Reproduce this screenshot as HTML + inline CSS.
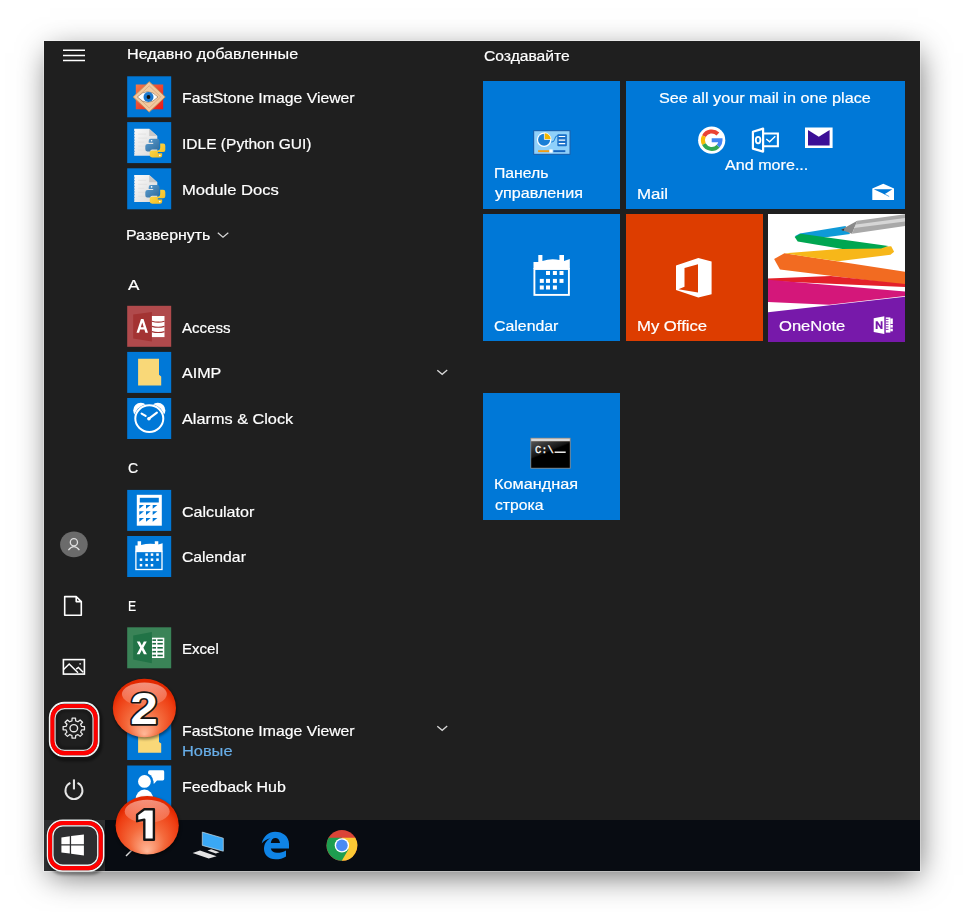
<!DOCTYPE html>
<html><head><meta charset="utf-8">
<style>
html,body{margin:0;padding:0;background:#fff;width:964px;height:912px;overflow:hidden;}
body{position:relative;font-family:"Liberation Sans",sans-serif;}
.a{position:absolute;}
#menu{position:absolute;left:44px;top:41px;width:876px;height:830px;background:#1f1f1f;
 box-shadow:0 0 0 1px rgba(255,255,255,0.3), 2px 8px 30px -4px rgba(0,0,0,0.62);}
#taskbar{position:absolute;left:44px;top:820px;width:876px;height:51px;background:#080c12;}
.t{position:absolute;color:#fff;font-size:15px;line-height:20px;white-space:nowrap;transform-origin:0 0;}
.ico{position:absolute;left:127px;width:44px;height:41px;background:#0078d7;}
.tile{position:absolute;background:#0078d7;}
.tl{position:absolute;color:#fff;font-size:15px;line-height:20.5px;}
.hdr{position:absolute;color:#fff;font-size:15px;line-height:18px;}
</style></head><body>
<div id="menu"></div>
<div id="taskbar"></div>

<!-- hamburger -->
<svg class="a" style="left:0;top:0" width="120" height="80"><path d="M63 50.3 H85 M63 55.4 H85 M63 60.5 H85" stroke="#fff" stroke-width="1.5"/></svg>


<!-- rail icons -->
<svg class="a" style="left:0;top:0" width="964" height="912" viewBox="0 0 964 912">
 <!-- user -->
 <ellipse cx="73.9" cy="544.4" rx="13.8" ry="12.9" fill="#6b6b6b"/>
 <circle cx="73.9" cy="542.2" r="3.6" fill="none" stroke="#e0e0e0" stroke-width="1.3"/>
 <path d="M68.4 550.2 Q73.9 543.2 79.4 550.2" fill="none" stroke="#e0e0e0" stroke-width="1.3"/>
 <!-- document -->
 <path d="M64.7 596.6 H76.2 L81.3 601.6 V615.3 H64.7 Z M76.2 596.6 V601.6 H81.3" fill="none" stroke="#fff" stroke-width="1.6" stroke-linejoin="round"/>
 <!-- pictures -->
 <rect x="63.4" y="659.6" width="21" height="14.5" fill="none" stroke="#fff" stroke-width="1.6"/>
 <path d="M63.6 669.5 L69.2 664 L78 672.8 M76.2 669.2 L78.4 667.4 L83.2 672.2" fill="none" stroke="#fff" stroke-width="1.5"/>
 <rect x="79.4" y="663.1" width="1.5" height="1.5" fill="#ddd"/>
 <!-- gear -->
 <g transform="translate(73.8 728.2) scale(1 0.94)">
  <path id="gear" fill="none" stroke="#e8e8e8" stroke-width="1.3" stroke-linejoin="round" d="M10.67 -1.69 L10.67 1.69 L7.78 1.87 L6.82 4.18 L8.74 6.35 L6.35 8.74 L4.18 6.82 L1.87 7.78 L1.69 10.67 L-1.69 10.67 L-1.87 7.78 L-4.18 6.82 L-6.35 8.74 L-8.74 6.35 L-6.82 4.18 L-7.78 1.87 L-10.67 1.69 L-10.67 -1.69 L-7.78 -1.87 L-6.82 -4.18 L-8.74 -6.35 L-6.35 -8.74 L-4.18 -6.82 L-1.87 -7.78 L-1.69 -10.67 L1.69 -10.67 L1.87 -7.78 L4.18 -6.82 L6.35 -8.74 L8.74 -6.35 L6.82 -4.18 L7.78 -1.87 Z"/>
  <circle r="3.8" fill="none" stroke="#e8e8e8" stroke-width="1.4"/>
 </g>
 <!-- power -->
 <path d="M70.4 782.9 A8.5 8.5 0 1 0 77.5 782.9" fill="none" stroke="#e6e6e6" stroke-width="1.9"/>
 <line x1="73.95" y1="779.4" x2="73.95" y2="789.4" stroke="#e0e0e0" stroke-width="2.1"/>
</svg>

<!-- list -->







<!-- tiles -->
<div class="tile" style="left:483px;top:81px;width:137px;height:128px"></div>
<div class="tile" style="left:626px;top:81px;width:279px;height:128px"></div>
<div class="tile" style="left:483px;top:214px;width:137px;height:127px"></div>
<div class="tile" style="left:626px;top:214px;width:137px;height:127px;background:#dd3d00"></div>
<div class="tile" style="left:768px;top:214px;width:137px;height:127px;background:#fff"></div>
<div class="tile" style="left:483px;top:393px;width:137px;height:127px"></div>











<!--ICONS-->
<svg class="a" style="left:0;top:0" width="964" height="912" viewBox="0 0 964 912">
<defs>
<linearGradient id="fsred" x1="0" y1="0" x2="1" y2="1"><stop offset="0" stop-color="#f47a4a"/><stop offset="1" stop-color="#e81818"/></linearGradient>
<linearGradient id="page" x1="0" y1="0" x2="1" y2="1"><stop offset="0" stop-color="#fafafa"/><stop offset="1" stop-color="#d8d8d8"/></linearGradient>
<linearGradient id="pyb" x1="0" y1="0" x2="1" y2="1"><stop offset="0" stop-color="#5a9fd4"/><stop offset="1" stop-color="#306998"/></linearGradient>
<linearGradient id="pyy" x1="0" y1="0" x2="1" y2="1"><stop offset="0" stop-color="#ffe052"/><stop offset="1" stop-color="#f2b61c"/></linearGradient>
<linearGradient id="fold" x1="0" y1="0" x2="1" y2="1"><stop offset="0" stop-color="#fde49b"/><stop offset="1" stop-color="#f6cf66"/></linearGradient>
<linearGradient id="cmdg" x1="0" y1="0" x2="0.6" y2="1"><stop offset="0" stop-color="#555"/><stop offset="0.45" stop-color="#151515"/><stop offset="0.5" stop-color="#000"/></linearGradient>
</defs>
<g transform="translate(127.2 76.3)">
<rect width="44" height="41" fill="#0078d7"/>
<rect x="8.6" y="8.2" width="27.4" height="24.8" fill="url(#fsred)"/>
<path d="M22 5.4 L38 20.6 L22 35.8 L6 20.6 Z" fill="#f2c9a0" stroke="#c8905c" stroke-width="1"/>
<path d="M22 9.5 L33.5 20.6 L22 31.7 L10.5 20.6 Z" fill="none" stroke="#dba578" stroke-width="0.8"/>
<path d="M10.2 20.7 Q20.5 9.8 30.8 20.7 Q20.5 31.6 10.2 20.7 Z" fill="#fff" stroke="#8a6040" stroke-width="0.6"/>
<circle cx="21.3" cy="20.7" r="5" fill="#1a78d0"/>
<circle cx="21.3" cy="20.7" r="1.9" fill="#111"/>
</g>
<g transform="translate(127.2 122.1)">
<rect width="44" height="41" fill="#0078d7"/>
<path d="M7 6.6 H22 L30.1 14 V33.7 H7 Z" fill="url(#page)"/>
<path d="M22 6.6 V14 H30.1 Z" fill="#c8c8c8"/>
<path d="M7.2 9 V32" stroke="#6aa8e0" stroke-width="1.2" stroke-dasharray="1.2 1.6"/>
<path d="M11 12 H19 M11 16 H20 M11 20 H17 M11 24 H18 M11 28 H19" stroke="#e0e0e0" stroke-width="0.8"/>
<path d="M23.5 16.7 H30 Q32.3 16.7 32.3 19 V25.5 Q32.3 27.5 30 27.5 H25 Q23 27.5 23 29.5 V29.3 H20 Q18.1 29.3 18.1 27 V24 Q18.1 21.8 20.5 21.8 H26 V20.6 H21.5 V19 Q21.5 16.7 23.5 16.7 Z" fill="url(#pyb)"/>
<path d="M27.5 21.4 V23.5 Q27.5 25.5 25.5 25.5 H24.5" fill="none"/>
<path d="M33 21.4 H36 Q38.1 21.4 38.1 23.6 V28 Q38.1 30 36 30 H30.5 V31.2 H35 V33.2 Q35 35.4 32.8 35.4 H25 Q22.5 35.4 22.5 33 V30.5 Q22.5 28.4 24.8 28.4 H30.5 Q33 28.4 33 26 Z" fill="url(#pyy)"/>
<circle cx="24.4" cy="18.6" r="0.8" fill="#fff"/>
<circle cx="32.6" cy="33.3" r="0.8" fill="#fff"/>
</g>
<g transform="translate(127.2 168.3)">
<rect width="44" height="41" fill="#0078d7"/>
<path d="M7 6.6 H22 L30.1 14 V33.7 H7 Z" fill="url(#page)"/>
<path d="M22 6.6 V14 H30.1 Z" fill="#c8c8c8"/>
<path d="M7.2 9 V32" stroke="#6aa8e0" stroke-width="1.2" stroke-dasharray="1.2 1.6"/>
<path d="M11 12 H19 M11 16 H20 M11 20 H17 M11 24 H18 M11 28 H19" stroke="#e0e0e0" stroke-width="0.8"/>
<path d="M23.5 16.7 H30 Q32.3 16.7 32.3 19 V25.5 Q32.3 27.5 30 27.5 H25 Q23 27.5 23 29.5 V29.3 H20 Q18.1 29.3 18.1 27 V24 Q18.1 21.8 20.5 21.8 H26 V20.6 H21.5 V19 Q21.5 16.7 23.5 16.7 Z" fill="url(#pyb)"/>
<path d="M27.5 21.4 V23.5 Q27.5 25.5 25.5 25.5 H24.5" fill="none"/>
<path d="M33 21.4 H36 Q38.1 21.4 38.1 23.6 V28 Q38.1 30 36 30 H30.5 V31.2 H35 V33.2 Q35 35.4 32.8 35.4 H25 Q22.5 35.4 22.5 33 V30.5 Q22.5 28.4 24.8 28.4 H30.5 Q33 28.4 33 26 Z" fill="url(#pyy)"/>
<circle cx="24.4" cy="18.6" r="0.8" fill="#fff"/>
<circle cx="32.6" cy="33.3" r="0.8" fill="#fff"/>
</g>
<g transform="translate(127.2 305.8)">
<rect width="44" height="41" fill="#b04a4c"/>
<path d="M6 8.8 L24.7 6.1 V35.7 L6 32.7 Z" fill="#a33333"/>
<path d="M24.7 10.2 H37.3 V31.3 H24.7 Z" fill="#fff"/>
<path d="M24.7 15.4 Q31 17.2 37.3 15.4 M24.7 20.6 Q31 22.4 37.3 20.6 M24.7 25.8 Q31 27.6 37.3 25.8" fill="none" stroke="#a33333" stroke-width="1.1"/>
<path d="M9.3 26.9 L13.8 13.2 H16.3 L20.8 26.9 H18.2 L17.2 23.7 H12.9 L11.9 26.9 Z M13.6 21.4 H16.5 L15.05 16.6 Z" fill="#fff"/>
</g>
<g transform="translate(127.2 351.9)">
<rect width="44" height="41" fill="#0078d7"/>
<path d="M10.9 6.9 H31.8 V22.9 L34 24.6 V33.7 H10.9 Z" fill="#f9d878"/>
</g>
<g transform="translate(127.2 398)">
<rect width="44" height="41" fill="#0078d7"/>
<circle cx="13.6" cy="12.4" r="7.6" fill="#fff"/>
<circle cx="30.6" cy="12.4" r="7.6" fill="#fff"/>
<ellipse cx="22.1" cy="20.6" rx="15.3" ry="14.5" fill="#0078d7"/>
<ellipse cx="22.1" cy="20.6" rx="14" ry="13.3" fill="none" stroke="#fff" stroke-width="2"/>
<path d="M14.4 15.6 L18.4 17.9 M21.7 20.7 L29.7 14.6" stroke="#fff" stroke-width="2.1" stroke-linecap="round"/>
<circle cx="21.7" cy="20.7" r="1.8" fill="#fff"/>
</g>
<g transform="translate(127.2 489.9)">
<rect width="44" height="41" fill="#0078d7"/>
<rect x="9.6" y="4.9" width="25" height="30.9" fill="#fff"/>
<rect x="12.6" y="7.9" width="19" height="4.7" fill="#0078d7"/>
<path d="M12.1 15.1 H16.8 L12.1 18.8 Z" fill="#0078d7"/><path d="M18.8 15.1 H23.5 L18.8 18.8 Z" fill="#0078d7"/><path d="M25.5 15.1 H30.2 L25.5 18.8 Z" fill="#0078d7"/><path d="M12.1 21.4 H16.8 L12.1 25.099999999999998 Z" fill="#0078d7"/><path d="M18.8 21.4 H23.5 L18.8 25.099999999999998 Z" fill="#0078d7"/><path d="M25.5 21.4 H30.2 L25.5 25.099999999999998 Z" fill="#0078d7"/><path d="M12.1 28.1 H16.8 L12.1 31.8 Z" fill="#0078d7"/><path d="M18.8 28.1 H23.5 L18.8 31.8 Z" fill="#0078d7"/><path d="M25.5 28.1 H30.2 L25.5 31.8 Z" fill="#0078d7"/>
</g>
<rect x="127.2" y="536" width="44" height="41" fill="#0078d7"/>
<g transform="translate(127.3 536) scale(1)">
<path d="M8 9.5 H10.3 V5.2 H13.8 V9 Q21 7 27.5 8 V5.2 H31 V8.5 L35.3 7.2 V15.5 H8 Z" fill="#fff"/>
<rect x="8.6" y="15.5" width="26.1" height="18" fill="none" stroke="#fff" stroke-width="1.3"/>
<rect x="18.05" y="17.35" width="2.5" height="2.5" fill="#fff"/><rect x="23.45" y="17.35" width="2.5" height="2.5" fill="#fff"/><rect x="28.95" y="17.35" width="2.5" height="2.5" fill="#fff"/><rect x="12.45" y="22.45" width="2.5" height="2.5" fill="#fff"/><rect x="18.05" y="22.45" width="2.5" height="2.5" fill="#fff"/><rect x="23.45" y="22.45" width="2.5" height="2.5" fill="#fff"/><rect x="28.95" y="22.45" width="2.5" height="2.5" fill="#fff"/><rect x="12.45" y="27.95" width="2.5" height="2.5" fill="#fff"/><rect x="18.05" y="27.95" width="2.5" height="2.5" fill="#fff"/><rect x="23.45" y="27.95" width="2.5" height="2.5" fill="#fff"/>
</g>
<g transform="translate(127.2 627.3)">
<rect width="44" height="41" fill="#3a8357"/>
<rect x="24.7" y="10.4" width="12.4" height="20.3" fill="#fff"/>
<rect x="25.2" y="12.05" width="3.6" height="1.6" fill="#1d6b40"/><rect x="30.2" y="12.05" width="5.4" height="1.6" fill="#1d6b40"/><rect x="25.2" y="15.6" width="3.6" height="1.6" fill="#1d6b40"/><rect x="30.2" y="15.6" width="5.4" height="1.6" fill="#1d6b40"/><rect x="25.2" y="19.7" width="3.6" height="1.6" fill="#1d6b40"/><rect x="30.2" y="19.7" width="5.4" height="1.6" fill="#1d6b40"/><rect x="25.2" y="23.6" width="3.6" height="1.6" fill="#1d6b40"/><rect x="30.2" y="23.6" width="5.4" height="1.6" fill="#1d6b40"/><rect x="25.2" y="27.4" width="3.6" height="1.6" fill="#1d6b40"/><rect x="30.2" y="27.4" width="5.4" height="1.6" fill="#1d6b40"/>
<path d="M6 8.2 L24.7 4.8 V35.9 L6 32.3 Z" fill="#217346"/>
<path d="M9.6 14.2 H12.6 L14.6 18.3 L16.6 14.2 H19.6 L16.2 20.5 L19.7 26.9 H16.7 L14.6 22.7 L12.5 26.9 H9.5 L13 20.5 Z" fill="#fff"/>
</g>
<g transform="translate(127.2 719.0)">
<rect width="44" height="41" fill="#0078d7"/>
<path d="M10.9 6.9 H31.8 V22.9 L34 24.6 V33.7 H10.9 Z" fill="#f9d878"/>
</g>
<g transform="translate(127.2 765.5)">
<rect width="44" height="54.5" fill="#0078d7"/>
<path d="M22.5 4.8 H35.6 Q37 4.8 37 6.2 V13.5 Q37 14.9 35.6 14.9 H29.8 L26.6 18.5 L26.1 14.9 H22.5 Q20.9 14.9 20.9 13.3 V6.4 Q20.9 4.8 22.5 4.8 Z" fill="#fff"/>
<circle cx="17.25" cy="15.95" r="8.8" fill="#0078d7"/>
<circle cx="17.25" cy="15.95" r="6.4" fill="#fff"/>
<ellipse cx="17.25" cy="34.5" rx="9" ry="10.5" fill="#fff"/>
</g>
<g transform="translate(533.2 130.2)">
<rect x="0" y="0" width="37.3" height="24.6" fill="#1f5fa8"/>
<rect x="1" y="1" width="35.3" height="22.6" fill="#8fd0fa"/>
<circle cx="10.9" cy="9.6" r="7.2" fill="#fff"/>
<circle cx="10.9" cy="9.6" r="6" fill="#1b7fd6"/>
<path d="M11.2 9.3 V2.6 A6.7 6.7 0 0 1 17.9 9.3 Z" fill="#f3b600" stroke="#fff" stroke-width="0.7"/>
<path d="M18 12 Q21 12 21.5 9 Q22 5.5 24.5 5.5" fill="none" stroke="#1b7fd6" stroke-width="1"/>
<rect x="24.1" y="4.1" width="9.6" height="12" rx="1" fill="#1b70c8"/>
<path d="M25.5 6.3 H32 M25.5 9.9 H32 M25.5 13.5 H32" stroke="#fff" stroke-width="1.2"/>
<rect x="4.9" y="20" width="11.2" height="1.9" fill="#f39c12"/>
<rect x="16.2" y="19.2" width="3.2" height="3.2" fill="#fff"/>
<rect x="20.2" y="20" width="11.9" height="1.9" fill="#1565c0"/>
</g>
<g transform="translate(711.7 140.2)">
<circle r="13.6" fill="#fff"/>
<path d="M6.2 -6.2 A8.8 8.8 0 0 0 -7.8 -4" fill="none" stroke="#ea4335" stroke-width="4"/>
<path d="M-7.8 -4 A8.8 8.8 0 0 0 -7.8 4" fill="none" stroke="#fbbc05" stroke-width="4"/>
<path d="M-7.8 4 A8.8 8.8 0 0 0 6.5 5.9" fill="none" stroke="#34a853" stroke-width="4"/>
<path d="M6.5 5.9 A8.8 8.8 0 0 0 8.8 0 H0" fill="none" stroke="#4285f4" stroke-width="4"/>
</g>
<g transform="translate(751.8 127.5)">
<path d="M1.1 4.2 L11.3 1.1 V24.1 L1.1 21.1 Z" fill="none" stroke="#fff" stroke-width="2.2" stroke-linejoin="round"/>
<path d="M11.3 6 H26.1 V18.8 H11.3" fill="none" stroke="#fff" stroke-width="2.1"/>
<ellipse cx="6.3" cy="12.6" rx="2.3" ry="3.3" fill="none" stroke="#fff" stroke-width="1.8"/>
<path d="M14.5 11.5 L17.8 14.3 L23.5 8.8" fill="none" stroke="#fff" stroke-width="1.4"/>
</g>
<g transform="translate(805 127.5)">
<rect x="0" y="0" width="27.6" height="20.5" fill="#fff"/>
<rect x="3" y="2.6" width="21.6" height="15.4" fill="#3b0f96"/>
<path d="M3 2.6 L13.8 9.2 L24.6 2.6 Z" fill="#fff"/>
</g>
<g transform="translate(872 183.3)">
<path d="M0.3 5.1 L11.3 0.4 L22 5.1 V16.7 H0.3 Z" fill="#fff"/>
<path d="M1.7 6 H20.4 L12.5 11 Z" fill="#0078d7"/>
<path d="M11.5 10.2 L17.2 13.2" stroke="#0078d7" stroke-width="0.9" opacity="0.7"/>
</g>
<g>
<path d="M533.5 262 H538.3 V255 H542.4 V261 Q551 258 559.4 260 V255 H564 V261 L569.8 259 V269 H533.5 Z" fill="#fff"/>
<rect x="534.4" y="269" width="34.5" height="25.9" fill="none" stroke="#fff" stroke-width="1.9"/>
<rect x="546" y="271" width="4" height="4" fill="#fff"/><rect x="552.9" y="271" width="4" height="4" fill="#fff"/><rect x="559.5" y="271" width="4" height="4" fill="#fff"/><rect x="539.8" y="278.9" width="4" height="4" fill="#fff"/><rect x="546" y="278.9" width="4" height="4" fill="#fff"/><rect x="552.9" y="278.9" width="4" height="4" fill="#fff"/><rect x="559.5" y="278.9" width="4" height="4" fill="#fff"/><rect x="539.8" y="285.5" width="4" height="4" fill="#fff"/><rect x="546" y="285.5" width="4" height="4" fill="#fff"/><rect x="552.9" y="285.5" width="4" height="4" fill="#fff"/>
</g>
<path d="M676 265.4 L698.3 258.1 L711.6 261.5 V294.3 L698.3 297.6 L676 290.1 Z M684.5 268.1 L698 264.2 V292.5 L678.4 289.2 L684.5 286.8 Z" fill="#fff" fill-rule="evenodd"/>
<g transform="translate(530.4 437.8)">
<rect x="0" y="0" width="40.2" height="30.8" fill="#9a8c80"/>
<rect x="0.8" y="0.8" width="38.6" height="2.6" fill="#d8d8d8"/>
<rect x="0.8" y="3.6" width="38.6" height="26.4" fill="url(#cmdg)"/>
<text x="4.5" y="15" font-family="Liberation Mono" font-size="10.5" fill="#fff" stroke="#fff" stroke-width="0.3" style="text-rendering:geometricPrecision">C:\</text>
<rect x="24.2" y="13.7" width="11.1" height="1.4" fill="#fff"/>
</g>
<svg x="768" y="214" width="137" height="128" viewBox="0 0 137 128">
<rect width="137" height="128" fill="#fff"/>
<path d="M6.1 45.1 L16.4 39.2 L137 57.7 V70.9 L12 55.4 Z" fill="#f26b21"/>
<path d="M17.1 39.2 L74.6 34.8 L123.2 32.2 L126.1 37.8 L122.5 40.7 L70.2 47.3 L40 43 Z" fill="#f7b719"/>
<path d="M26.7 22.3 L31.9 19.4 L77.5 12 L82 20.1 L59.9 23 L30 24 Z" fill="#0f9ad8"/>
<path d="M26.7 23 L32.6 19.8 L120.3 31.9 L113 34.5 L74.6 34.9 L29.7 27.5 Z" fill="#00a651"/>
<path d="M73.1 15.7 L89.3 6.8 L84 19.8 Z" fill="#8a8a8a"/>
<path d="M89.3 6.8 L137 0.3 V12 L84 19.8 Z" fill="#a9a9a9"/>
<path d="M88 10.5 L137 4 V7.5 L86 14 Z" fill="#d6d6d6"/>
<path d="M73.1 15.7 L76.5 14.5 L75.5 17 Z" fill="#333"/>
<path d="M0 64.6 L62.8 62 L137 70 V73 L0 67 Z" fill="#e3202a"/>
<path d="M0 65.8 L137 77.5 V82 L61.3 90.8 L0 87.9 Z" fill="#d4177a"/>
<path d="M0 98.2 L137 82.7 V128 H0 Z" fill="#7719aa"/>
</svg>
<g transform="translate(873.7 316.2)">
<path d="M0 2.1 L10.6 0 V17.8 L0 15.7 Z" fill="#fff"/>
<path d="M2 12.8 V5.1 H3.9 L7 9.9 V5.1 H8.8 V12.8 H7 L3.9 8 V12.8 Z" fill="#7719aa"/>
<rect x="12.05" y="1.2" width="4.6" height="15.2" fill="#fff"/>
<path d="M12 3.2 H14.8 M12 5.7 H14.8 M12 8.2 H14.8 M12 10.7 H14.8 M12 13.2 H14.8" stroke="#7719aa" stroke-width="0.9"/>
<rect x="16.6" y="2.3" width="2.5" height="5.6" fill="#fff"/>
<rect x="16.6" y="8.8" width="2.5" height="2.6" fill="#fff"/>
<rect x="16.6" y="12.5" width="2.5" height="2.6" fill="#fff"/>
</g>
</svg>
<!--/ICONS-->
<!-- taskbar content -->
<div class="a" style="left:44px;top:820px;width:61px;height:51px;background:#2d2e30"></div>
<svg class="a" style="left:0;top:0" width="964" height="912" viewBox="0 0 964 912">
 <!-- windows logo -->
 <path d="M61.4 837.4 L69.8 836.3 V844.2 H61.4 Z M71.1 836.1 L83.9 834.6 V844.2 H71.1 Z M61.4 845.6 H69.8 V853.6 L61.4 852.5 Z M71.1 845.6 H83.9 V855.6 L71.1 853.8 Z" fill="#fff"/>
 <!-- search handle -->
 <line x1="126" y1="856" x2="132" y2="850" stroke="#ddd" stroke-width="1.4"/>
 <!-- computer -->
 <path d="M202.3 832.1 L223.3 838.2 V851.2 L202.3 845.4 Z" fill="#3aa8f5" stroke="#c8d8e0" stroke-width="0.7"/>
 <path d="M207.5 850.4 L211.2 849.3 L219.5 852.3 L215.8 853.5 Z" fill="#e0e0e0"/>
 <path d="M192.6 852.9 L200 850.6 L216.6 856.2 L208.7 858.5 Z" fill="#e4e4e4"/>
 <!-- edge -->
 <path fill-rule="evenodd" fill="#0f84e6" d="M261.7 843.5 C263.5 836 269 831.8 275 831.8 C283 831.8 289 836.5 289 844 V848.5 H270.8 C271.5 851.5 274 852.8 277 852.8 C280.5 852.8 283.5 852 286 850.5 V856.5 C283 858.5 279.5 859.3 275.5 859.3 C268.5 859.3 264 854.5 264 849 C264 844 266.5 840.2 270.5 838.3 C267 839 263.5 841 261.7 843.5 Z M270.8 843.1 H280 C279.8 840 277.8 838.1 275.4 838.1 C273 838.1 271 840 270.8 843.1 Z"/>
 <!-- chrome -->
 <g transform="translate(341.9 845.4)">
  <circle r="15.4" fill="#db4437"/>
  <path d="M0 0 L13.34 -7.7 A15.4 15.4 0 0 1 -0.1 15.4 Z" fill="#fcc934"/>
  <path d="M0 0 L-0.1 15.4 A15.4 15.4 0 0 1 -13.34 -7.7 Z" fill="#1e9e50"/>
  <path d="M-13.34 -7.7 L0 -7.7 L-6.5 3.5 Z" fill="#1e9e50"/>
  <path d="M13.34 -7.7 L0 -7.7 L6.6 3.8 Z" fill="#fcc934"/>
  <path d="M-0.1 15.4 L6.6 3.8 L-6.5 3.5 Z" fill="#1e9e50"/>
  <circle r="7.2" fill="#fff"/>
  <circle r="5.8" fill="#4a8af4"/>
 </g>
</svg>

<!-- chevrons -->
<svg class="a" style="left:0;top:0" width="964" height="912" viewBox="0 0 964 912">
<path d="M217.8 232.8 L223 237.2 L228.3 232.8" fill="none" stroke="#d8d8d8" stroke-width="1.2"/>
<path d="M437.3 370.2 L442.2 374.3 L447.2 370.1" fill="none" stroke="#d8d8d8" stroke-width="1.3"/>
<path d="M437.3 726.2 L442.2 730.3 L447.2 726.1" fill="none" stroke="#d8d8d8" stroke-width="1.3"/>
</svg>
<!--TEXT-->
<div class="t" style="left:127.12px;top:44.40px;color:#fff;-webkit-text-stroke:0.2px #fff;transform:scaleX(1.0778)">Недавно добавленные</div>
<div class="t" style="left:181.95px;top:87.60px;color:#fff;-webkit-text-stroke:0.2px #fff;transform:scaleX(1.0528)">FastStone Image Viewer</div>
<div class="t" style="left:181.86px;top:133.90px;color:#fff;-webkit-text-stroke:0.2px #fff;transform:scaleX(1.0358)">IDLE (Python GUI)</div>
<div class="t" style="left:181.79px;top:179.50px;color:#fff;-webkit-text-stroke:0.2px #fff;transform:scaleX(1.1070)">Module Docs</div>
<div class="t" style="left:125.74px;top:225.20px;color:#fff;-webkit-text-stroke:0.2px #fff;transform:scaleX(1.0615)">Развернуть</div>
<div class="t" style="left:128.40px;top:274.50px;color:#fff;-webkit-text-stroke:0.2px #fff;transform:scaleX(1.1400)">A</div>
<div class="t" style="left:182.00px;top:317.50px;color:#fff;-webkit-text-stroke:0.2px #fff;transform:scaleX(1.0063)">Access</div>
<div class="t" style="left:182.00px;top:363.30px;color:#fff;-webkit-text-stroke:0.2px #fff;transform:scaleX(1.0722)">AIMP</div>
<div class="t" style="left:182.00px;top:409.30px;color:#fff;-webkit-text-stroke:0.2px #fff;transform:scaleX(1.0845)">Alarms &amp; Clock</div>
<div class="t" style="left:128.40px;top:458.00px;color:#fff;-webkit-text-stroke:0.2px #fff;transform:scaleX(0.9364)">C</div>
<div class="t" style="left:182.00px;top:501.50px;color:#fff;-webkit-text-stroke:0.2px #fff;transform:scaleX(1.0706)">Calculator</div>
<div class="t" style="left:182.00px;top:547.40px;color:#fff;-webkit-text-stroke:0.2px #fff;transform:scaleX(1.0492)">Calendar</div>
<div class="t" style="left:127.79px;top:595.90px;color:#fff;-webkit-text-stroke:0.2px #fff;transform:scaleX(0.8111)">E</div>
<div class="t" style="left:181.90px;top:639.20px;color:#fff;-webkit-text-stroke:0.2px #fff;transform:scaleX(1.0029)">Excel</div>
<div class="t" style="left:181.85px;top:721.00px;color:#fff;-webkit-text-stroke:0.2px #fff;transform:scaleX(1.0528)">FastStone Image Viewer</div>
<div class="t" style="left:181.81px;top:741.30px;color:#68aee8;-webkit-text-stroke:0.2px #68aee8;transform:scaleX(1.0911)">Новые</div>
<div class="t" style="left:181.84px;top:776.60px;color:#fff;-webkit-text-stroke:0.2px #fff;transform:scaleX(1.0635)">Feedback Hub</div>
<div class="t" style="left:483.60px;top:45.50px;font-size:15.3px;color:#fff;-webkit-text-stroke:0.2px #fff;transform:scaleX(1.0226)">Создавайте</div>
<div class="t" style="left:494.27px;top:163.00px;font-size:15.3px;color:#fff;-webkit-text-stroke:0.2px #fff;transform:scaleX(1.0308)">Панель</div>
<div class="t" style="left:494.60px;top:183.20px;font-size:15.3px;color:#fff;-webkit-text-stroke:0.2px #fff;transform:scaleX(1.0542)">управления</div>
<div class="t" style="left:658.74px;top:87.90px;font-size:15.3px;color:#fff;-webkit-text-stroke:0.2px #fff;transform:scaleX(1.0598)">See all your mail in one place</div>
<div class="t" style="left:724.70px;top:154.70px;font-size:15.3px;color:#fff;-webkit-text-stroke:0.2px #fff;transform:scaleX(1.0538)">And more...</div>
<div class="t" style="left:636.70px;top:184.00px;font-size:15.3px;color:#fff;-webkit-text-stroke:0.2px #fff;transform:scaleX(1.1037)">Mail</div>
<div class="t" style="left:494.10px;top:315.80px;font-size:15.3px;color:#fff;-webkit-text-stroke:0.2px #fff;transform:scaleX(1.0371)">Calendar</div>
<div class="t" style="left:636.71px;top:316.20px;font-size:15.3px;color:#fff;-webkit-text-stroke:0.2px #fff;transform:scaleX(1.0905)">My Office</div>
<div class="t" style="left:779.10px;top:316.20px;font-size:15.3px;color:#fff;-webkit-text-stroke:0.2px #fff;transform:scaleX(1.0836)">OneNote</div>
<div class="t" style="left:494.24px;top:474.10px;font-size:15.3px;color:#fff;-webkit-text-stroke:0.2px #fff;transform:scaleX(1.0623)">Командная</div>
<div class="t" style="left:494.60px;top:494.50px;font-size:15.3px;color:#fff;-webkit-text-stroke:0.2px #fff;transform:scaleX(1.0271)">строка</div>
<!--/TEXT-->
<!-- overlays: red outlines and badges -->
<svg class="a" style="left:0;top:0" width="964" height="912" viewBox="0 0 964 912">
 <defs>
  <radialGradient id="bg" cx="0.5" cy="0.62" r="0.55" fx="0.5" fy="0.95">
   <stop offset="0" stop-color="#ffb898"/>
   <stop offset="0.5" stop-color="#f46a3c"/>
   <stop offset="0.88" stop-color="#ee3d12"/>
   <stop offset="1" stop-color="#e22800"/>
  </radialGradient>
  <linearGradient id="hl" x1="0" y1="0" x2="0" y2="1">
   <stop offset="0" stop-color="#ffd8d0" stop-opacity="0.6"/>
   <stop offset="1" stop-color="#ffc0b0" stop-opacity="0.25"/>
  </linearGradient>
  <filter id="sh" x="-30%" y="-30%" width="160%" height="160%"><feGaussianBlur stdDeviation="1.8"/></filter>
 </defs>
 <!-- gear outline -->
 <rect x="50.5" y="704.5" width="50" height="55" rx="15" fill="none" stroke="#000" stroke-opacity="0.55" stroke-width="3" filter="url(#sh)"/>
 <rect x="49.8" y="702.8" width="48.7" height="53.3" rx="14.5" fill="none" stroke="#eef3f3" stroke-width="1.9"/>
 <rect x="52.6" y="706.1" width="42.9" height="47" rx="12" fill="none" stroke="#ff0000" stroke-width="4.4"/>
 <rect x="55.1" y="708.7" width="37.9" height="41.7" rx="9.5" fill="none" stroke="#eef3f3" stroke-width="1.2"/>
 <rect x="57" y="710.5" width="34" height="38" rx="8" fill="none" stroke="#000" stroke-opacity="0.35" stroke-width="2.5" filter="url(#sh)"/>
 <!-- start outline -->
 <rect x="48.5" y="822.5" width="56.5" height="50.5" rx="15" fill="none" stroke="#000" stroke-opacity="0.45" stroke-width="3" filter="url(#sh)"/>
 <rect x="47.65" y="820.35" width="55.9" height="50.65" rx="15" fill="none" stroke="#eef3f3" stroke-width="1.7"/>
 <rect x="50.2" y="823.1" width="50.45" height="45.05" rx="12.5" fill="none" stroke="#ff0000" stroke-width="4.2"/>
 <rect x="52.9" y="825.95" width="44.85" height="39.3" rx="10" fill="none" stroke="#eef3f3" stroke-width="1.3"/>
 <!-- badge 2 -->
 <g transform="translate(144.4 708) scale(1 0.927)">
  <circle r="32" fill="#000" opacity="0.45" filter="url(#sh)" transform="translate(0.6 1.8)"/>
  <circle r="31.6" fill="url(#bg)"/>
  <ellipse cx="0" cy="-15" rx="22.5" ry="12.5" fill="url(#hl)"/>
 </g>
 <text x="0" y="0" font-family="Liberation Sans" font-weight="bold" font-size="45" text-anchor="middle" fill="#fff" stroke="#151515" stroke-width="3.4" paint-order="stroke" stroke-linejoin="round" transform="translate(143.9 724.2) scale(1.1 1)">2</text>
 <!-- badge 1 -->
 <g transform="translate(147.2 825.3) scale(1 0.927)">
  <circle r="32" fill="#000" opacity="0.45" filter="url(#sh)" transform="translate(0.6 1.8)"/>
  <circle r="31.6" fill="url(#bg)"/>
  <ellipse cx="0" cy="-15" rx="22.5" ry="12.5" fill="url(#hl)"/>
 </g>
 <path d="M144.3 809.2 H153.9 V839.8 H144.3 V819.6 L137.1 821.2 V814.6 Z" fill="#fff" stroke="#151515" stroke-width="2.4" stroke-linejoin="round"/>
</svg>
</body></html>
